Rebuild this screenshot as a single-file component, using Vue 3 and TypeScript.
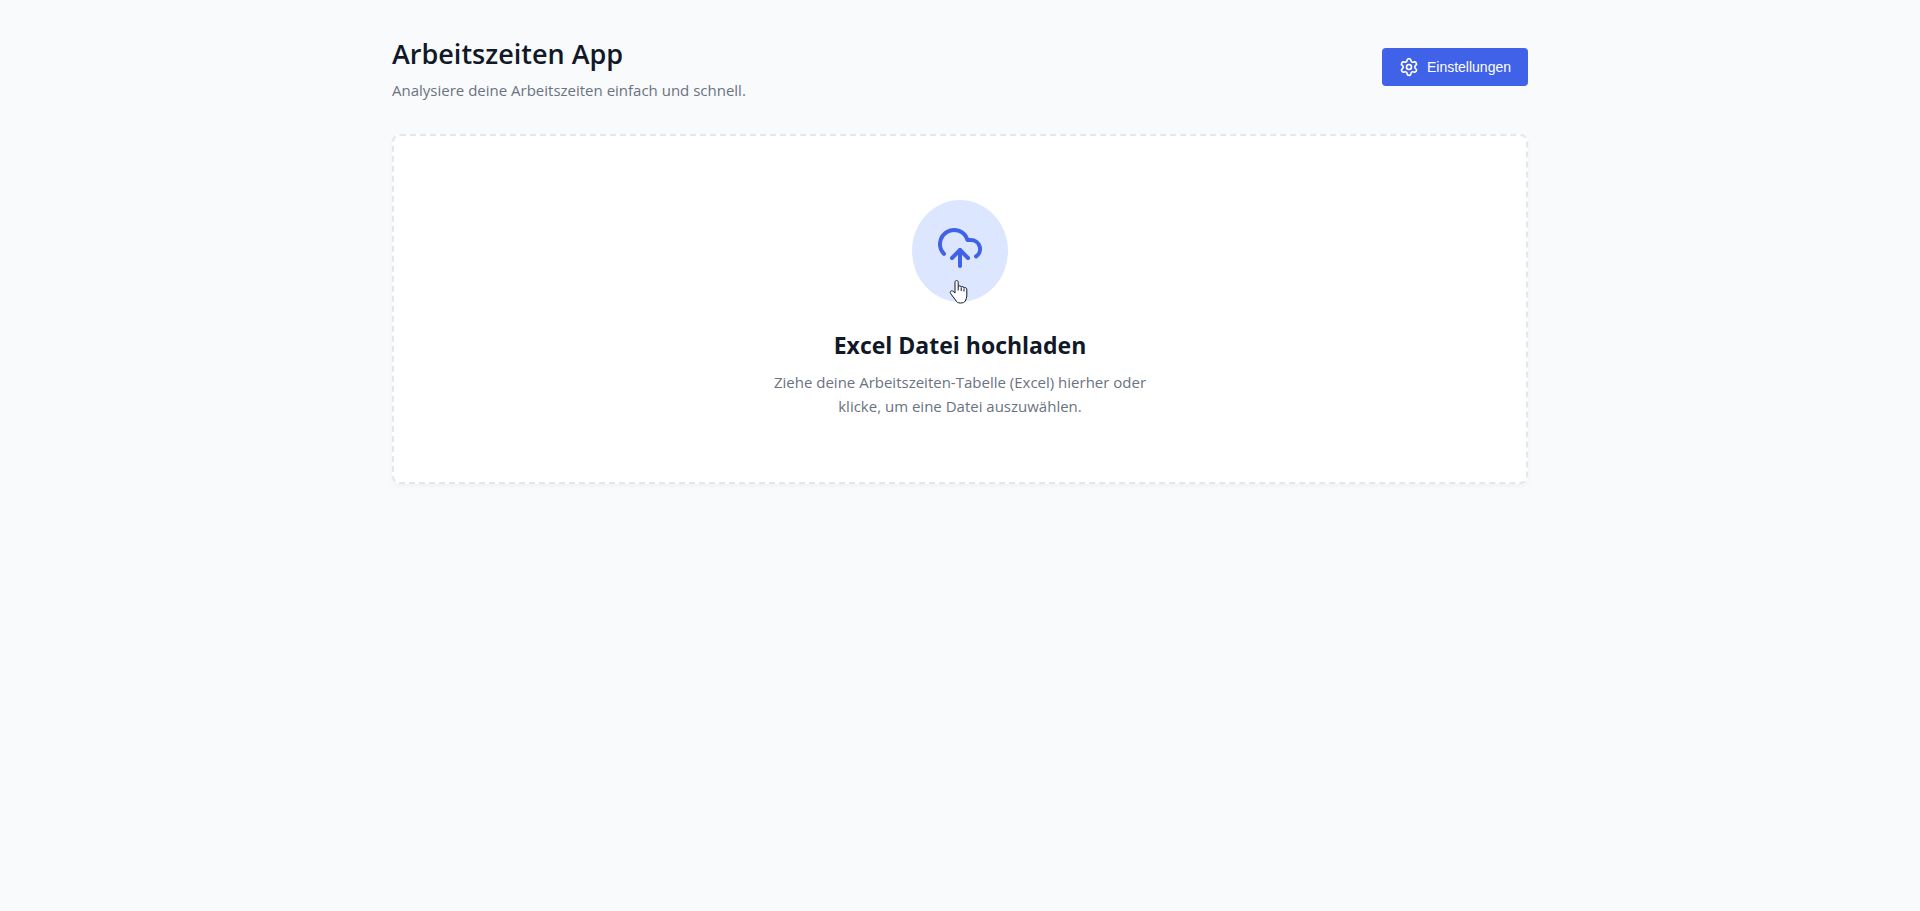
<script setup lang="ts">
import { ref } from 'vue'

const fileInput = ref<HTMLInputElement | null>(null)
const openPicker = (): void => fileInput.value?.click()
</script>

<template>
  <main class="page">
    <header class="header">
      <div>
        <h1 class="title">Arbeitszeiten App</h1>
        <p class="text">Analysiere deine Arbeitszeiten einfach und schnell.</p>
      </div>
      <button class="settings" type="button">
        <svg class="gear" viewBox="0 0 24 24" aria-hidden="true">
          <path d="M9.671 4.136a2.34 2.34 0 0 1 4.659 0 2.34 2.34 0 0 0 3.319 1.915 2.34 2.34 0 0 1 2.33 4.033 2.34 2.34 0 0 0 0 3.831 2.34 2.34 0 0 1-2.33 4.033 2.34 2.34 0 0 0-3.319 1.915 2.34 2.34 0 0 1-4.659 0 2.34 2.34 0 0 0-3.32-1.915 2.34 2.34 0 0 1-2.33-4.033 2.34 2.34 0 0 0 0-3.831A2.34 2.34 0 0 1 6.35 6.051a2.34 2.34 0 0 0 3.319-1.915" />
          <circle cx="12" cy="12" r="3" />
        </svg>
        Einstellungen
      </button>
    </header>

    <section class="dropzone" @click="openPicker">
      <input id="excel-file" ref="fileInput" class="file" type="file" accept=".xlsx,.xls" @click.stop />
      <div class="badge">
        <svg class="cloud" viewBox="0 0 24 24" aria-hidden="true">
          <path d="M12 13v8" />
          <path d="M4 14.899A7 7 0 1 1 15.71 8h1.79a4.5 4.5 0 0 1 2.5 8.242" />
          <path d="m8 17 4-4 4 4" />
        </svg>
        <svg class="pointer" viewBox="0 0 20 25" aria-hidden="true">
          <path d="M6 14V3.200c0-2.300 3.200-2.300 3.200 0V7.500c.6-1 3-.8 3 .6.8-.9 2.800-.6 2.800.9.900-.8 2.800-.3 2.800 1.300V17c0 2-1 3.500-1.500 5-.7 1.300-2.300 2-4.800 2-2.800 0-4-1-5-3l-4.900-6.500c-1.200-2 .9-3.500 2.500-2.200z" />
          <path d="M9.200 7.500v4M12.200 8.500v3.500M15 9.500v3" />
        </svg>
      </div>
      <h2 class="subtitle"><label for="excel-file" @click.stop>Excel Datei hochladen</label></h2>
      <p class="text hint">Ziehe deine Arbeitszeiten-Tabelle (Excel) hierher oder klicke, um eine Datei auszuwählen.</p>
    </section>
  </main>
</template>

<style>
body {
  margin: 0;
  background: #f9fafc;
}
</style>

<style scoped>
.page {
  box-sizing: border-box;
  max-width: 1200px;
  margin: 0 auto;
  padding: 32px;
  color: #111827;
  font-family: "Segoe UI", "Open Sans", sans-serif;
  font-size: 15px;
  line-height: 24px;
}

.header {
  display: flex;
  align-items: center;
  justify-content: space-between;
  margin-bottom: 32px;
}

.title {
  margin: 0 0 2px;
  font-size: 27px;
  font-weight: 600;
  line-height: 44px;
}

.text {
  margin: 0;
  color: #6b7280;
}

.settings {
  display: flex;
  align-items: center;
  gap: 8px;
  padding: 9px 17px;
  border: 0;
  border-radius: 4px;
  background: #4062e8;
  color: #fff;
  font-family: "Liberation Sans", Arial, sans-serif;
  font-size: 14px;
  line-height: 20px;
  cursor: pointer;
}

.gear,
.cloud {
  fill: none;
  stroke: currentColor;
  stroke-width: 2;
  stroke-linecap: round;
  stroke-linejoin: round;
}

.gear {
  width: 20px;
  height: 20px;
}

.dropzone {
  display: flex;
  flex-direction: column;
  align-items: center;
  padding: 64px 32px;
  border: 2px dashed #e5e7eb;
  border-radius: 8px;
  background: #fff;
  box-shadow: 0 2px 5px rgba(0, 0, 0, 0.04);
  text-align: center;
  cursor: pointer;
}

.file {
  display: none;
}

.badge {
  position: relative;
  box-sizing: border-box;
  height: 102px;
  margin-bottom: 24px;
  padding: 24px;
  border-radius: 50%;
  background: #dce6fe;
  color: #4062e8;
}

.cloud {
  display: block;
  width: 48px;
  height: 48px;
}

.pointer {
  position: absolute;
  top: 79px;
  left: 37px;
  width: 20px;
  height: 25px;
  fill: #fff;
  stroke: #111827;
  stroke-width: 1;
  stroke-linejoin: round;
}

.subtitle {
  margin: 0 0 6px;
  font-size: 23px;
  font-weight: 700;
  line-height: 38px;
}

.subtitle label {
  cursor: pointer;
}

.hint {
  max-width: 400px;
}
</style>
